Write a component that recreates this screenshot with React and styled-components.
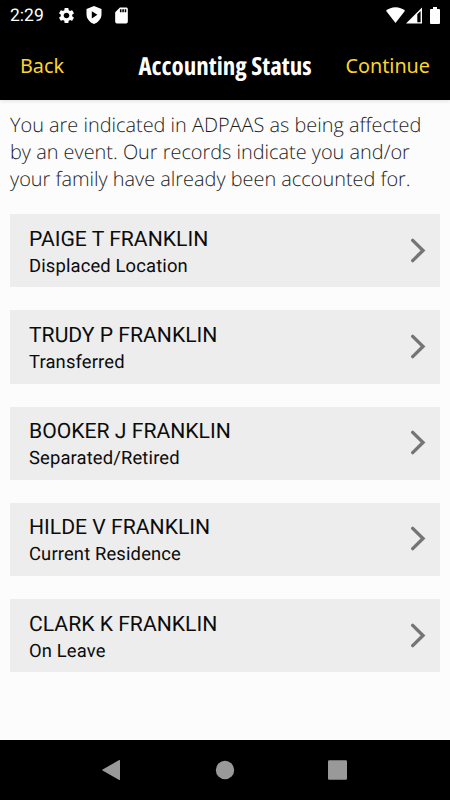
import React from 'react'
import styled, { createGlobalStyle } from 'styled-components'
import { MdSettings, MdSdStorage } from 'react-icons/md'

const people = [
  { name: 'PAIGE T FRANKLIN', status: 'Displaced Location' },
  { name: 'TRUDY P FRANKLIN', status: 'Transferred' },
  { name: 'BOOKER J FRANKLIN', status: 'Separated/Retired' },
  { name: 'HILDE V FRANKLIN', status: 'Current Residence' },
  { name: 'CLARK K FRANKLIN', status: 'On Leave' },
]

const ShieldIcon = () => (
  <svg width='16' height='18' viewBox='0 0 16 18'>
    <path
      fill='#fff'
      fillRule='evenodd'
      d='M8 0 15.500 3v5.200c0 4.400-3 8-7.500 9.800C3.500 16.200.500 12.600.500 8.200V3zM5.800 5.200v7.200l5.600-3.600z'
    />
  </svg>
)

const WifiIcon = () => (
  <svg width='20' height='16' viewBox='0 0 20 16'>
    <path fill='#fff' d='M9.500 16 0 3.800C2.600 1.400 5.800.200 9.500.200s7 1.200 9.500 3.600z' />
  </svg>
)

const SignalIcon = () => (
  <svg width='17' height='17' viewBox='0 0 17 17'>
    <path fill='#fff' fillRule='evenodd' d='M0 16.500 16 .500v16zM11.300 7.300v7.900h3.300V4z' />
  </svg>
)

const BatteryIcon = () => (
  <svg width='10' height='17' viewBox='0 0 10 17'>
    <path fill='#fff' d='M3 0h4v2h2a1 1 0 0 1 1 1v13a1 1 0 0 1-1 1H1a1 1 0 0 1-1-1V3a1 1 0 0 1 1-1h2z' />
  </svg>
)

const Chevron = () => (
  <svg width='16' height='26' viewBox='0 0 16 26'>
    <path
      fill='none'
      stroke='#757575'
      strokeWidth='3.400'
      strokeLinecap='round'
      d='M2.700 2.400 13 12.500 2.700 22.600'
    />
  </svg>
)

const App = () => (
  <Screen>
    <GlobalStyle />
    <StatusBar>
      <Clock>2:29</Clock>
      <Notifications>
        <MdSettings size={19} />
        <ShieldIcon />
        <MdSdStorage size={19} />
      </Notifications>
      <SystemIcons>
        <WifiIcon />
        <SignalIcon />
        <BatteryIcon />
      </SystemIcons>
    </StatusBar>
    <Header>
      <HeaderButton>Back</HeaderButton>
      <Title>Accounting Status</Title>
      <HeaderButton $end>Continue</HeaderButton>
    </Header>
    <Content>
      <Intro>
        You are indicated in ADPAAS as being affected
        <br />
        by an event. Our records indicate you and/or
        <br />
        your family have already been accounted for.
      </Intro>
      <List>
        {people.map(({ name, status }) => (
          <Card key={name}>
            <div>
              <Name>{name}</Name>
              <Status>{status}</Status>
            </div>
            <Chevron />
          </Card>
        ))}
      </List>
    </Content>
    <NavBar>
      <svg width='20' height='22' viewBox='0 0 20 22'>
        <path fill='#999' d='M17.200 1.100Q18 .700 18 1.600v18.800q0 .900-.800.500L.600 11.600q-.900-.600 0-1.200z' />
      </svg>
      <svg width='20' height='22' viewBox='0 0 20 22'>
        <circle fill='#999' cx='10' cy='11' r='9.200' />
      </svg>
      <svg width='20' height='22' viewBox='0 0 20 22'>
        <rect fill='#999' x='0' y='1.300' width='19' height='19.500' rx='1.200' />
      </svg>
    </NavBar>
  </Screen>
)

const GlobalStyle = createGlobalStyle`
  * {
    box-sizing: border-box;
  }

  body {
    margin: 0;
    background: #000;
  }

  svg {
    display: block;
    flex-shrink: 0;
  }
`

const Screen = styled.div`
  width: 450px;
  height: 800px;
  display: flex;
  flex-direction: column;
  overflow: hidden;
  background: #fcfcfc;
  color: #0c0c0c;
  font-family: Roboto, 'Liberation Sans', sans-serif;
  text-rendering: geometricPrecision;
  white-space: nowrap;
`

const StatusBar = styled.div`
  height: 30px;
  flex-shrink: 0;
  display: flex;
  align-items: center;
  padding: 0 10px;
  background: #000;
  color: #fff;
`

const Clock = styled.span`
  width: 47px;
  padding-top: 2px;
  font-size: 17.5px;
`

const Notifications = styled.div`
  display: flex;
  align-items: center;
  gap: 10px;
`

const SystemIcons = styled.div`
  display: flex;
  align-items: center;
  margin-left: auto;

  svg:last-child {
    margin-left: 7px;
  }
`

const Header = styled.header`
  height: 70px;
  flex-shrink: 0;
  display: grid;
  grid-template-columns: 110px 1fr 110px;
  align-items: center;
  padding: 0 20px;
  background: #000;
  box-shadow: 0 1px 4px rgba(0, 0, 0, 0.12);
`

const HeaderButton = styled.button`
  padding: 1px 0 0;
  border: 0;
  background: none;
  color: #fdd52b;
  font-family: 'Noto Sans', sans-serif;
  font-size: 19.8px;
  line-height: 28px;
  text-align: ${({ $end }) => ($end ? 'right' : 'left')};
`

const Title = styled.h1`
  margin: 0;
  padding-top: 2px;
  color: #fff;
  font-family: 'Open Sans', sans-serif;
  font-size: 25px;
  font-stretch: 75%;
  font-weight: 700;
  line-height: 34px;
  text-align: center;
`

const Content = styled.main`
  flex: 1;
  padding: 11px 10px 0;
`

const Intro = styled.p`
  margin: 0;
  color: #1c1c1c;
  font-family: 'Open Sans', sans-serif;
  font-size: 19.9px;
  font-weight: 300;
  line-height: 27px;
`

const List = styled.div`
  display: flex;
  flex-direction: column;
  gap: 23px;
  margin-top: 22px;
`

const Card = styled.div`
  height: 73.25px;
  display: flex;
  align-items: center;
  justify-content: space-between;
  padding: 0 14px 0 19px;
  background: #ededed;
`

const Name = styled.div`
  padding-top: 4px;
  font-size: 21.15px;
  line-height: 27px;
`

const Status = styled.div`
  font-size: 18.4px;
  letter-spacing: 0.14px;
  line-height: 27px;
`

const NavBar = styled.nav`
  height: 60px;
  flex-shrink: 0;
  display: flex;
  align-items: center;
  justify-content: center;
  gap: 93px;
  background: #000;
`

export default App
